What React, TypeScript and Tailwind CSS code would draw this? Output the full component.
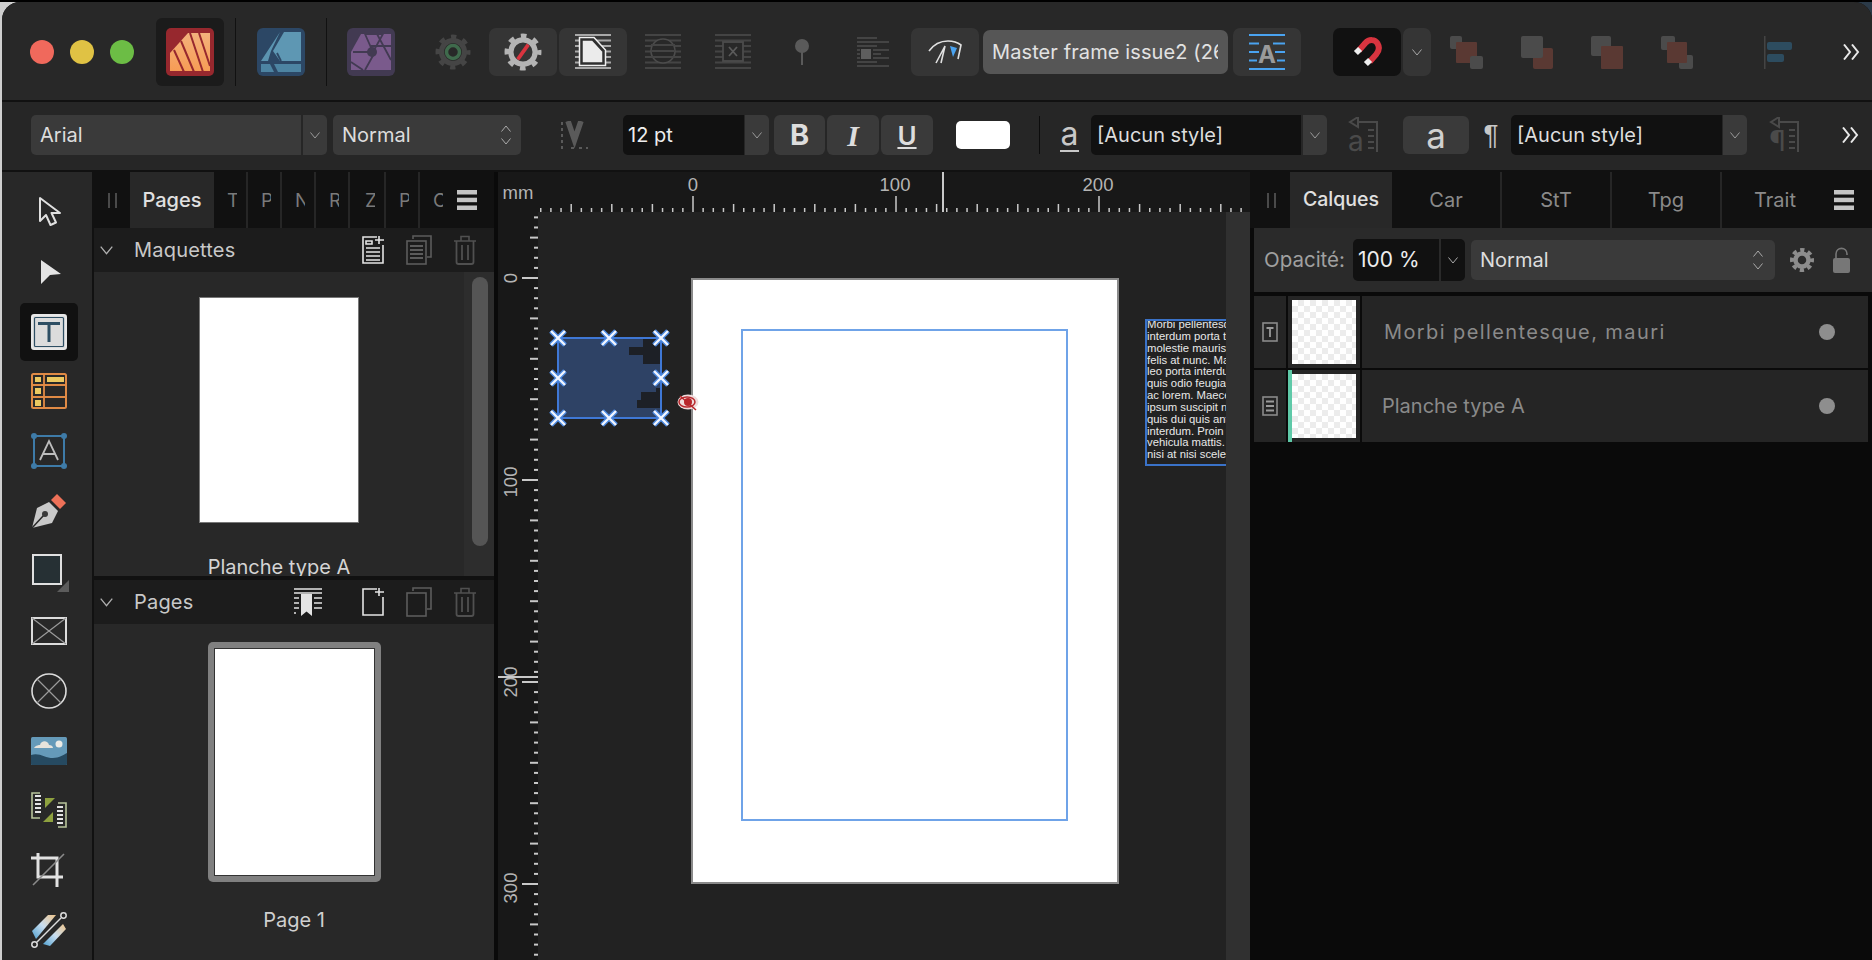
import React from "react";

const F = "font-['Inter','Liberation_Sans',sans-serif]";

const Chev = ({ c = "#aaa", w = 10, h = 7, up = false }: { c?: string; w?: number; h?: number; up?: boolean }) => (
  <svg width={w} height={h} viewBox="0 0 10 7" className="shrink-0">
    <path d={up ? "M0.5 6.5 L5 1 L9.5 6.5" : "M0.5 0.5 L5 6 L9.5 0.5"} fill="none" stroke={c} strokeWidth="1" />
  </svg>
);

const UpDown = ({ c = "#aaa" }: { c?: string }) => (
  <div className="flex flex-col gap-[6px]">
    <Chev c={c} up />
    <Chev c={c} />
  </div>
);

const More = () => (
  <svg width="17" height="16" viewBox="0 0 17 16" className="shrink-0">
    <path d="M1 0.5 L7 8 L1 15.5 M9 0.5 L15 8 L9 15.5" fill="none" stroke="#e8e8e8" strokeWidth="2" />
  </svg>
);

const Burger = ({ w = 20 }: { w?: number }) => (
  <svg width={w} height="20" viewBox={`0 0 ${w} 20`} className="shrink-0">
    <rect width={w} height="4.5" fill="#c4c4c4" />
    <rect y="7.7" width={w} height="4.5" fill="#c4c4c4" />
    <rect y="15.5" width={w} height="4.5" fill="#c4c4c4" />
  </svg>
);

const Grip = () => (
  <svg width="9" height="15" viewBox="0 0 9 15" className="shrink-0">
    <path d="M1 0V15M8 0V15" stroke="#4a4a4a" strokeWidth="2" />
  </svg>
);

const Gear = ({ size, c, children }: { size: number; c: string; children?: React.ReactNode }) => (
  <svg width={size} height={size} viewBox="0 0 36 36" className="shrink-0">
    <circle cx="18" cy="18" r="11.5" fill="none" stroke={c} strokeWidth="5" />
    <circle cx="18" cy="18" r="15" fill="none" stroke={c} strokeWidth="5" strokeDasharray="5.3 6.5" strokeDashoffset="2.6" />
    {children}
  </svg>
);

const Publisher = () => (
  <svg width="48" height="48" viewBox="0 0 48 48">
    <rect width="48" height="48" rx="5" fill="#97282e" />
    <defs>
      <linearGradient id="pub" x1="0" y1="0" x2="0" y2="1">
        <stop offset="0" stopColor="#f3b27c" />
        <stop offset="1" stopColor="#f79c55" />
      </linearGradient>
    </defs>
    <path d="M22 5H44V43H4V25Z" fill="url(#pub)" />
    <path d="M24 5L37 44M33 5L44 38M15 13L28 44M8 22L18 44" stroke="#97282e" strokeWidth="2" fill="none" />
  </svg>
);

const Designer = () => (
  <svg width="48" height="48" viewBox="0 0 48 48">
    <rect width="48" height="48" rx="6" fill="#2c4765" />
    <path d="M27 4H44V33H23L16 23Z" fill="#5e97b3" />
    <path d="M4 33L23 4L14 23L11 33Z" fill="#5b94b0" />
    <path d="M4 36H44V44H21L17 36M13 36L17 44H4V36Z" fill="#4d84a2" />
    <path d="M20 25L24 33" stroke="#2c4765" strokeWidth="1.8" />
  </svg>
);

const PhotoApp = () => (
  <svg width="48" height="48" viewBox="0 0 48 48">
    <rect width="48" height="48" rx="6" fill="#423a52" />
    <path d="M14 6H44V42H4V24Z" fill="#7a5a8c" />
    <path d="M18 6L36 6L26 24ZM6 24H24M30 6L44 32M44 18H24M28 24L18 42M4 34L16 42" stroke="#423a52" strokeWidth="1.8" fill="none" />
    <circle cx="25" cy="24" r="5" fill="#423a52" />
  </svg>
);

const Stripes = ({ c, n = 7 }: { c: string; n?: number }) => (
  <>
    {Array.from({ length: n }).map((_, i) => (
      <rect key={i} y={i * (33 / (n - 1))} width="36" height="2" fill={c} />
    ))}
  </>
);

const WrapPage = () => (
  <svg width="36" height="36" viewBox="0 0 36 36" className="shrink-0">
    <Stripes c="#a8a8a8" />
    <path d="M6 5H18L29 17V30H6Z" fill="#ebebeb" stroke="#2f2f2f" strokeWidth="3.5" />
    <path d="M4.5 3.5H19L30.5 16V31.5H4.5Z" fill="none" stroke="#f0f0f0" strokeWidth="1.5" />
  </svg>
);

const WrapCircle = () => (
  <svg width="36" height="36" viewBox="0 0 36 36" className="shrink-0">
    <Stripes c="#444" />
    <circle cx="18" cy="17" r="12" fill="#282828" stroke="#4c4c4c" strokeWidth="1.6" />
    <path d="M6 11H30M6 17H30M6 23H30" stroke="#444" strokeWidth="2" />
  </svg>
);

const WrapBox = () => (
  <svg width="36" height="36" viewBox="0 0 36 36" className="shrink-0">
    <Stripes c="#444" />
    <rect x="8" y="8" width="20" height="19" fill="#282828" stroke="#4c4c4c" strokeWidth="1.8" />
    <path d="M14 13L22 22M22 13L14 22" stroke="#5a5a5a" strokeWidth="1.8" />
  </svg>
);

const Pin = () => (
  <svg width="16" height="26" viewBox="0 0 16 26" className="shrink-0">
    <circle cx="8" cy="7" r="7" fill="#5a5a5a" />
    <rect x="7" y="12" width="2" height="14" fill="#5a5a5a" />
  </svg>
);

const ParaImage = () => (
  <svg width="32" height="30" viewBox="0 0 32 30" className="shrink-0">
    <g fill="#444">
      <rect width="20" height="2" />
      <rect y="4" width="32" height="2" />
      <rect y="8" width="20" height="2" />
      <rect y="12" width="3" height="2" />
      <rect x="16" y="12" width="16" height="2" />
      <rect y="16" width="3" height="2" />
      <rect x="16" y="16" width="8" height="2" />
      <rect y="20" width="3" height="2" />
      <rect x="16" y="20" width="16" height="2" />
      <rect y="24" width="20" height="2" />
      <rect y="28" width="32" height="2" />
    </g>
    <rect x="4" y="12" width="10" height="10" fill="#5e5e5e" />
  </svg>
);

const Gauge = () => (
  <svg width="34" height="26" viewBox="0 0 34 26" className="shrink-0">
    <path d="M1 12C6 5 13 2 20 2C25 2 29 3 33 6L30 20" fill="none" stroke="#e0e0e0" strokeWidth="1.6" />
    <path d="M8 24L17 7L13 24" fill="none" stroke="#e0e0e0" strokeWidth="1.6" />
    <path d="M22 7L29 9L25 18Z" fill="#4aa3f0" />
  </svg>
);

const FrameA = () => (
  <svg width="36" height="36" viewBox="0 0 36 36" className="shrink-0">
    <path d="M0 1H36M0 35H36" stroke="#4aa3f0" strokeWidth="2" />
    <path d="M0 9.5H10M24 9.5H36M0 18H10M26 18H36M0 26.5H8M28 26.5H36" stroke="#4aa3f0" strokeWidth="2" />
    <text x="18" y="29" textAnchor="middle" fontSize="24" fontWeight="700" fill="#9a9a9a" fontFamily="Inter, sans-serif">A</text>
  </svg>
);

const Magnet = () => (
  <svg width="30" height="30" viewBox="0 0 30 30" className="shrink-0">
    <path d="M7 13L14 6C18 2 24 3 26 7C28 11 27 15 24 18L17 25" fill="none" stroke="#d8343f" strokeWidth="6" transform="rotate(-4 15 15)" />
    <path d="M4 12L8 16" stroke="#eee" strokeWidth="6" />
    <path d="M14 23L18 27" stroke="#eee" strokeWidth="6" />
  </svg>
);

const Bool = ({ k }: { k: number }) => {
  const g = "#4b4b4b";
  const b = "#5a3933";
  return (
    <svg width="33" height="33" viewBox="0 0 33 33" className="shrink-0">
      {k === 1 && (
        <>
          <rect width="12" height="13" rx="2" fill={g} />
          <rect x="6" y="6" width="21" height="21" rx="1" fill={b} />
          <rect x="20" y="20" width="13" height="13" rx="2" fill={g} />
        </>
      )}
      {k === 2 && (
        <>
          <rect x="12" y="12" width="20" height="21" rx="2" fill={b} />
          <rect width="22" height="22" rx="2" fill={g} />
        </>
      )}
      {k === 3 && (
        <>
          <rect width="20" height="20" rx="2" fill={g} />
          <rect x="10" y="10" width="22" height="23" rx="1" fill={b} />
        </>
      )}
      {k === 4 && (
        <>
          <rect width="14" height="14" rx="2" fill={g} />
          <rect x="18" y="19" width="14" height="14" rx="2" fill={g} />
          <rect x="6" y="6" width="20" height="21" rx="1" fill={b} />
        </>
      )}
    </svg>
  );
};

const Align = () => (
  <svg width="28" height="33" viewBox="0 0 28 33" className="shrink-0">
    <rect width="1.5" height="33" fill="#444" />
    <rect x="3" y="6" width="25" height="8" rx="2" fill="#2d4c5f" />
    <rect x="3" y="18" width="17" height="8" rx="2" fill="#2d4c5f" />
  </svg>
);

const Kern = () => (
  <svg width="27" height="28" viewBox="0 0 27 28" className="shrink-0">
    <path d="M7 0L13.5 19L20 0" fill="none" stroke="#5a5a5a" strokeWidth="5.5" />
    <path d="M1 1V22M1 25V27H5M10 27H13M18 27H21M25 27H27" stroke="#5a5a5a" strokeWidth="2" strokeDasharray="3 3" fill="none" />
  </svg>
);

const StyleArrow = ({ glyph }: { glyph: string }) => (
  <svg width="30" height="36" viewBox="0 0 30 36" className="shrink-0">
    <path d="M10 5H29V35M2 5L10 0V10Z" fill="none" stroke="#4a4a4a" strokeWidth="2" />
    <path d="M20 13H26M20 19H26M20 25H26M20 31H26" stroke="#4a4a4a" strokeWidth="2" />
    <text x="0" y="34" fontSize="28" fill="#4a4a4a" fontFamily="Inter, sans-serif">{glyph}</text>
  </svg>
);

const Cursor = () => (
  <svg width="36" height="36" viewBox="0 0 36 36">
    <path d="M9 4V27L15 21L19.5 31L25 28.5L20.5 19H29Z" fill="#282828" stroke="#e0e0e0" strokeWidth="2" strokeLinejoin="round" />
  </svg>
);
const NodeTool = () => (
  <svg width="36" height="36" viewBox="0 0 36 36">
    <path d="M10 6L30 20L19 21L10 30Z" fill="#e4e4e4" />
  </svg>
);
const TextTool = () => (
  <svg width="36" height="36" viewBox="0 0 36 36">
    <rect x="1" y="1" width="34" height="34" rx="2" fill="#dcdcdc" stroke="#e8e8e8" strokeWidth="2" />
    <rect x="3.5" y="3.5" width="29" height="29" rx="1" fill="none" stroke="#2d4e63" strokeWidth="1.2" />
    <path d="M7 9.5H29M18 9.5V28" stroke="#2d4e63" strokeWidth="3" fill="none" />
  </svg>
);
const TableTool = () => (
  <svg width="36" height="36" viewBox="0 0 36 36">
    <rect x="1" y="1" width="34" height="34" rx="1.5" fill="none" stroke="#e08a45" strokeWidth="2" />
    <path d="M1 12H35M1 24H35M13 1V35" stroke="#e08a45" strokeWidth="1.8" />
    <g fill="#ecc860">
      <rect x="4" y="4" width="6" height="5" />
      <rect x="16" y="4" width="17" height="5" />
      <rect x="4" y="15" width="6" height="6" />
      <rect x="4" y="27" width="6" height="6" />
    </g>
  </svg>
);
const FrameText = () => (
  <svg width="36" height="36" viewBox="0 0 36 36">
    <rect x="3" y="3" width="30" height="30" fill="none" stroke="#3e7ba8" strokeWidth="2" />
    <g fill="#3e7ba8">
      <circle cx="3" cy="3" r="3" />
      <circle cx="33" cy="3" r="3" />
      <circle cx="3" cy="33" r="3" />
      <circle cx="33" cy="33" r="3" />
    </g>
    <path d="M9 27L18 8L27 27M12 21H24" fill="none" stroke="#bdbdbd" strokeWidth="1.8" />
  </svg>
);
const Pen = () => (
  <svg width="36" height="36" viewBox="0 0 36 36">
    <path d="M1 35L6 15L18 9L27 18L21 30Z" fill="#c9c9c9" />
    <path d="M1 35L13 22" stroke="#282828" strokeWidth="1.5" />
    <circle cx="14" cy="21" r="3" fill="#3a3a3a" />
    <path d="M20 7L26 1L35 10L29 16Z" fill="#ee7158" />
  </svg>
);
const RectTool = () => (
  <svg width="42" height="40" viewBox="0 0 42 40">
    <rect x="4" y="1" width="28" height="29" fill="#263034" stroke="#e0e0e0" strokeWidth="2" />
    <path d="M40 26V38H28Z" fill="#5c5c5c" />
  </svg>
);
const PicFrame = () => (
  <svg width="36" height="28" viewBox="0 0 36 28">
    <rect x="1" y="1" width="34" height="26" fill="none" stroke="#dcdcdc" strokeWidth="2" />
    <path d="M1 1L35 27M35 1L1 27" stroke="#9a9a9a" strokeWidth="1.2" />
  </svg>
);
const EllFrame = () => (
  <svg width="36" height="36" viewBox="0 0 36 36">
    <circle cx="18" cy="18" r="17" fill="none" stroke="#dcdcdc" strokeWidth="1.6" />
    <path d="M6 6L30 30M30 6L6 30" stroke="#9a9a9a" strokeWidth="1.2" />
  </svg>
);
const ImageTool = () => (
  <svg width="36" height="28" viewBox="0 0 36 28">
    <rect width="36" height="28" rx="1.5" fill="#659ab9" />
    <path d="M0 18C8 15 14 21 22 21C28 21 32 18 36 16V27A1 1 0 0 1 35 28H1A1 1 0 0 1 0 27Z" fill="#264a61" />
    <circle cx="28" cy="7" r="3.5" fill="#ecebe6" />
    <path d="M3 11C5 8 8 8 9 8C10 3 17 3 18 8C20 8 22 9 22 11Z" fill="#e6e3dc" />
  </svg>
);
const LinkTool = () => (
  <svg width="36" height="36" viewBox="0 0 36 36">
    <path d="M9 1H1V26H9" fill="none" stroke="#b7c49a" strokeWidth="1.6" />
    <path d="M27 35H35V11H27" fill="none" stroke="#b7c49a" strokeWidth="1.6" />
    <path d="M4 4H10M4 8H10M4 12H10M4 16H10M4 20H10M26 15H32M26 19H32M26 23H32M26 27H32M26 31H32" stroke="#e4e4e4" strokeWidth="2" />
    <path d="M14 6H24L14 16Z" fill="#8ea13f" />
    <path d="M22 20V30H12Z" fill="#8ea13f" />
  </svg>
);
const CropTool = () => (
  <svg width="36" height="34" viewBox="0 0 36 34">
    <path d="M7 0V24H32M0 5H26V34" fill="none" stroke="#e2e2e2" strokeWidth="3" />
    <path d="M2 32L33 1" stroke="#8a8a8a" strokeWidth="1.6" />
  </svg>
);
const EraserTool = () => (
  <svg width="36" height="36" viewBox="0 0 36 36">
    <defs>
      <linearGradient id="er" x1="0" y1="1" x2="1" y2="0">
        <stop offset="0" stopColor="#4d9fcf" />
        <stop offset="0.5" stopColor="#c9def0" />
        <stop offset="1" stopColor="#eec48a" />
      </linearGradient>
    </defs>
    <path d="M1 19L17 3L25 3L5 27Z" fill="url(#er)" />
    <path d="M12 32L32 12L35 17L19 34Z" fill="url(#er)" />
    <path d="M6 30L30 6" stroke="#ddd" strokeWidth="1.5" />
    <circle cx="32.5" cy="3.5" r="2.7" fill="#282828" stroke="#ddd" strokeWidth="1.5" />
    <circle cx="3.5" cy="32.5" r="2.7" fill="#282828" stroke="#ddd" strokeWidth="1.5" />
  </svg>
);

const NewDoc = ({ lines, c = "#e4e4e4" }: { lines?: boolean; c?: string }) => (
  <svg width="22" height="28" viewBox="0 0 22 28" className="shrink-0">
    <path d="M15 1H1V27H21V9" fill="none" stroke={c} strokeWidth="1.6" />
    <path d="M17 0V8M13 4H22" stroke={c} strokeWidth="1.6" />
    {lines && <path d="M4 5H10V8H4ZM4 12H18M4 16H18M4 20H18M4 24H18" stroke={c} strokeWidth="1.6" fill="none" />}
  </svg>
);
const DupDoc = ({ lines }: { lines?: boolean }) => (
  <svg width="26" height="30" viewBox="0 0 26 30" className="shrink-0">
    <path d="M7 4V1H25V22H21" fill="none" stroke="#5c5c5c" strokeWidth="1.6" />
    <rect x="1" y="6" width="19" height="23" fill="none" stroke="#5c5c5c" strokeWidth="1.6" />
    {lines && <path d="M4 11H17M4 15H17M4 19H17M4 23H17" stroke="#5c5c5c" strokeWidth="2" />}
  </svg>
);
const Trash = () => (
  <svg width="22" height="30" viewBox="0 0 22 30" className="shrink-0">
    <path d="M0 6H22M7 6V1.5H15V6" fill="none" stroke="#505050" strokeWidth="1.6" />
    <path d="M2.5 6V27C2.5 28.5 3 29 4.5 29H17.5C19 29 19.5 28.5 19.5 27V6M8 10V25M14 10V25" fill="none" stroke="#505050" strokeWidth="1.8" />
  </svg>
);
const Bookmark = () => (
  <svg width="28" height="28" viewBox="0 0 28 28" className="shrink-0">
    <path d="M0 1H28M0 5H28" stroke="#e4e4e4" strokeWidth="1.6" />
    <path d="M7 6H18V28L12.5 23.5L7 28Z" fill="#e4e4e4" />
    <path d="M0 10H5M0 15H5M0 20H5M0 25H2M20 10H28M20 15H28M20 20H28" stroke="#e4e4e4" strokeWidth="1.6" />
  </svg>
);

const Field = ({ t, w, bg, className = "", tc = "text-[#ddd]", px = "pl-[9px]" }: { t: string; w: string; bg: string; className?: string; tc?: string; px?: string }) => (
  <div className={`${w} ${bg} ${px} ${tc} ${className} h-[40px] flex items-center text-[20px] whitespace-nowrap overflow-hidden shrink-0`}>{t}</div>
);

const Drop = ({ className = "", bg = "bg-[#3a3a3a]" }: { className?: string; bg?: string }) => (
  <div className={`${className} ${bg} w-[24px] h-[40px] rounded-r-[5px] flex items-center justify-center shrink-0`}>
    <Chev c="#9a9a9a" />
  </div>
);

const Btn = ({ className = "", children }: { className?: string; children: React.ReactNode }) => (
  <div className={`${className} w-[68px] h-[48px] rounded-[7px] bg-[#353535] flex items-center justify-center shrink-0`}>{children}</div>
);

const RulerH = () => {
  const ticks = [];
  for (let i = -15; i <= 54; i++) {
    const x = 195 + i * 10.15;
    const h = i % 20 === 0 ? 16 : i % 4 === 0 ? 8 : 4;
    ticks.push(<rect key={i} x={x - 0.75} y={40 - h} width="1.5" height={h} fill="#c8c8c8" />);
  }
  return (
    <svg width="752" height="40" viewBox="0 0 752 40" className="block">
      <g fontFamily="Liberation Sans, Arial, sans-serif" fontSize="18.5" fill="#b4b4b4" textAnchor="middle">
        <text x="20" y="27">mm</text>
        <text x="195" y="19">0</text>
        <text x="397" y="19">100</text>
        <text x="600" y="19">200</text>
      </g>
      {ticks}
      <rect x="444" y="0" width="2" height="40" fill="#c8c8c8" />
    </svg>
  );
};

const RulerV = () => {
  const ticks = [];
  for (let i = -6; i <= 68; i++) {
    const y = 66 + i * 10.1;
    const w = i % 20 === 0 ? 16 : i % 4 === 0 ? 8 : 4;
    ticks.push(<rect key={i} x={40 - w} y={y - 1} width={w} height="2" fill="#c8c8c8" />);
  }
  const labels: [string, number][] = [["0", 66], ["100", 270], ["200", 470], ["300", 676]];
  return (
    <svg width="40" height="748" viewBox="0 0 40 748" className="block">
      <g fontFamily="Liberation Sans, Arial, sans-serif" fontSize="18.5" fill="#b4b4b4" textAnchor="middle">
        {labels.map(([t, y]) => (
          <text key={t} x="12" y={y} dy="7" transform={`rotate(-90 12 ${y})`}>{t}</text>
        ))}
      </g>
      {ticks}
      <rect x="0" y="464" width="40" height="2" fill="#c8c8c8" />
    </svg>
  );
};

const Selection = () => {
  const xs = [558, 609, 661];
  const ys = [338, 378, 418];
  const pts = xs.flatMap((x) => ys.map((y) => [x, y])).filter(([x, y]) => !(x === 609 && y === 378));
  return (
    <svg width="160" height="110" viewBox="543 322 160 110" className="absolute left-[5px] top-[110px]">
      <rect x="558" y="338" width="103" height="80" fill="#2e4265" />
      <path d="M643 339H660V364H643V355H629V347H643ZM656 388H660V408H637V400H641V392H656Z" fill="#1d2026" />
      <rect x="558" y="338" width="103" height="80" fill="none" stroke="#3f78d6" strokeWidth="2" />
      {pts.map(([x, y]) => (
        <g key={`${x}-${y}`}>
          <path d={`M${x - 7} ${y - 7}L${x + 7} ${y + 7}M${x + 7} ${y - 7}L${x - 7} ${y + 7}`} stroke="#4a86dc" strokeWidth="5.2" />
          <path d={`M${x - 7} ${y - 7}L${x + 7} ${y + 7}M${x + 7} ${y - 7}L${x - 7} ${y + 7}`} stroke="#f2f6ff" strokeWidth="2.4" />
        </g>
      ))}
      <ellipse cx="688" cy="402" rx="10.5" ry="7.5" fill="#efdcdc" />
      <ellipse cx="687" cy="402" rx="8" ry="5" fill="none" stroke="#b8272c" strokeWidth="1.5" />
      <circle cx="688" cy="402" r="4" fill="#b8272c" />
      <path d="M680 396L696 410" stroke="#b8272c" strokeWidth="1.6" />
    </svg>
  );
};

const LINES = [
  "Morbi pellentesque, mauris",
  "interdum porta tellus",
  "molestie mauris sit amet",
  "felis at nunc. Mauris",
  "leo porta interdum",
  "quis odio feugiat",
  "ac lorem. Maecenas",
  "ipsum suscipit nec",
  "quis dui quis ante",
  "interdum. Proin a",
  "vehicula mattis. Sed",
  "nisi at nisi scelerisque",
];

const Checker = ({ className = "" }: { className?: string }) => (
  <div className={`${className} w-[64px] h-[64px] bg-[repeating-conic-gradient(#ececec_0_25%,#ffffff_0_50%)] bg-[length:12px_12px]`} />
);

const SectionHeader = ({ title, children }: { title: string; children: React.ReactNode }) => (
  <div className="h-[44px] bg-[#1c1c1c] flex items-center shrink-0">
    <div className="ml-[6px]"><Chev c="#b0b0b0" w={13} h={9} /></div>
    <span className="ml-[21px] text-[20px] tracking-[0.2px] text-[#c8c8c8]">{title}</span>
    <div className="ml-auto flex items-center gap-[22px] pr-[18px]">{children}</div>
  </div>
);

const SmallTab = ({ t, last }: { t: string; last?: boolean }) => (
  <div className={`w-[34px] h-full pl-[13px] flex items-center shrink-0 ${last ? "" : "border-r-2 border-[#262626]"}`}>
    <span className="w-[10px] overflow-hidden block text-[19px] text-[#7a7a7a] leading-none">{t}</span>
  </div>
);

const BigTab = ({ t, w, last }: { t: string; w: string; last?: boolean }) => (
  <div className={`${w} h-full flex items-center justify-center shrink-0 text-[20px] text-[#8a8a8a] ${last ? "" : "border-r-2 border-[#262626]"}`}>{t}</div>
);

const Tool = ({ children, sel }: { children: React.ReactNode; sel?: boolean }) => (
  <div className={`w-[58px] h-[58px] my-[1px] flex items-center justify-center rounded-[5px] ${sel ? "bg-[#111]" : ""}`}>{children}</div>
);

const LayerRow = ({ name, icon, green, tx, mt }: { name: string; icon: React.ReactNode; green?: boolean; tx: string; mt?: string }) => (
  <div className={`${mt ?? ""} h-[72px] flex gap-[2px] pr-[4px] shrink-0`}>
    <div className="w-[32px] bg-[#252525] flex items-center justify-center">{icon}</div>
    <div className={`w-[72px] bg-[#252525] flex items-center ${green ? "border-l-4 border-[#5fc9a8]" : "pl-[4px]"}`}>
      <Checker />
    </div>
    <div className="flex-1 bg-[#252525] flex items-center">
      <span className={`${tx} text-[20px] text-[#8a8a8a]`}>{name}</span>
      <span className="ml-auto mr-[33px] w-[16px] h-[16px] rounded-full bg-[#8e8e8e]" />
    </div>
  </div>
);

export default function App() {
  return (
    <div className={`${F} w-[1872px] h-[960px] overflow-hidden border-t-2 border-black pl-[2px] bg-[linear-gradient(to_right,#cfcfcf_50%,#2b3a48_50%)]`}>
      <div className="w-[1870px] h-[958px] rounded-t-[18px] overflow-hidden bg-[#111] flex flex-col">
        {/* Row 1 */}
        <div className="h-[98px] pt-[2px] bg-[#282828] flex items-center shrink-0">
          <span className="ml-[28px] w-[24px] h-[24px] rounded-full bg-[#f0695c] shrink-0" />
          <span className="ml-[16px] w-[24px] h-[24px] rounded-full bg-[#e0c244] shrink-0" />
          <span className="ml-[16px] w-[24px] h-[24px] rounded-full bg-[#6cbd45] shrink-0" />
          <div className="ml-[22px] w-[68px] h-[68px] rounded-[6px] bg-[#1b1b1b] flex items-center justify-center shrink-0"><Publisher /></div>
          <div className="ml-[11px] w-[1px] h-[68px] bg-[#111] shrink-0" />
          <div className="ml-[21px] shrink-0"><Designer /></div>
          <div className="ml-[21px] w-[1px] h-[68px] bg-[#111] shrink-0" />
          <div className="ml-[20px] shrink-0"><PhotoApp /></div>
          <div className="ml-[40px] shrink-0">
            <Gear size={36} c="#454545"><circle cx="18" cy="18" r="6.5" fill="none" stroke="#3f6a4c" strokeWidth="3.5" /></Gear>
          </div>
          <Btn className="ml-[18px]">
            <Gear size={38} c="#b4b4b4"><path d="M13 25L23 11" stroke="#d9343f" strokeWidth="3.5" /></Gear>
          </Btn>
          <Btn className="ml-[2px]"><WrapPage /></Btn>
          <div className="ml-[18px] shrink-0"><WrapCircle /></div>
          <div className="ml-[34px] shrink-0"><WrapBox /></div>
          <div className="ml-[43px] shrink-0"><Pin /></div>
          <div className="ml-[47px] shrink-0"><ParaImage /></div>
          <Btn className="ml-[22px]"><Gauge /></Btn>
          <div className="ml-[4px] w-[245px] h-[44px] rounded-[7px] bg-[#565656] pl-[9px] flex items-center shrink-0">
            <div className="w-[226px] shrink-0 overflow-hidden whitespace-nowrap text-[20px] tracking-[0.1px] text-[#e2e2e2]">Master frame issue2 (26 pages).afpub</div>
          </div>
          <Btn className="ml-[5px]"><FrameA /></Btn>
          <div className="ml-[32px] w-[68px] h-[48px] rounded-[7px] bg-[#111] flex items-center justify-center shrink-0"><Magnet /></div>
          <div className="ml-[2px] w-[28px] h-[48px] rounded-[7px] bg-[#353535] flex items-center justify-center shrink-0"><Chev c="#a8a8a8" /></div>
          <div className="ml-[19px] shrink-0"><Bool k={1} /></div>
          <div className="ml-[38px] shrink-0"><Bool k={2} /></div>
          <div className="ml-[37px] shrink-0"><Bool k={3} /></div>
          <div className="ml-[37px] shrink-0"><Bool k={4} /></div>
          <div className="ml-[70px] shrink-0"><Align /></div>
          <div className="ml-[51px] shrink-0"><More /></div>
        </div>
        <div className="h-[2px] shrink-0 bg-[#111]" />
        {/* Row 2 */}
        <div className="h-[68px] pb-[2px] bg-[#262626] flex items-center shrink-0">
          <Field t="Arial" w="w-[270px]" bg="bg-[#3a3a3a]" className="ml-[29px] rounded-l-[5px]" />
          <Drop className="ml-[2px]" />
          <div className="ml-[6px] w-[188px] h-[40px] rounded-[5px] bg-[#3a3a3a] pl-[9px] pr-[10px] flex items-center justify-between text-[20px] text-[#ddd] shrink-0">
            <span>Normal</span>
            <UpDown />
          </div>
          <div className="ml-[40px] shrink-0"><Kern /></div>
          <Field t="12 pt" w="w-[121px]" bg="bg-[#111]" px="pl-[5px]" className="ml-[35px] rounded-l-[5px] text-[#eee]" />
          <Drop className="ml-[1px]" />
          <div className="ml-[5px] w-[51px] h-[40px] rounded-[6px] bg-[#3a3a3a] flex items-center justify-center text-[29px] font-bold text-[#ddd] shrink-0">B</div>
          <div className="ml-[2px] w-[52px] h-[40px] rounded-[6px] bg-[#3a3a3a] flex items-center justify-center font-['Liberation_Serif',serif] text-[30px] font-bold italic text-[#ddd] shrink-0">I</div>
          <div className="ml-[2px] w-[52px] h-[40px] rounded-[6px] bg-[#3a3a3a] flex items-center justify-center text-[26px] font-semibold underline text-[#ddd] shrink-0">U</div>
          <div className="ml-[23px] w-[54px] h-[28px] rounded-[5px] bg-white shrink-0" />
          <div className="ml-[29px] w-[1px] h-[38px] bg-[#0c0c0c] shrink-0" />
          <div className="ml-[20px] w-[19px] text-[32px] leading-[32px] text-[#c8c8c8] border-b-2 border-[#c8c8c8] flex justify-center shrink-0">a</div>
          <Field t="[Aucun style]" w="w-[210px]" bg="bg-[#111]" px="pl-[6px]" className="ml-[12px] rounded-l-[5px] text-[#ddd]" />
          <Drop className="ml-[2px]" />
          <div className="ml-[21px] shrink-0"><StyleArrow glyph="a" /></div>
          <div className="ml-[25px] w-[66px] h-[38px] rounded-[6px] bg-[#3a3a3a] flex items-center justify-center text-[35px] leading-none text-[#d0d0d0] shrink-0">a</div>
          <div className="ml-[16px] w-[12px] font-['Liberation_Sans',sans-serif] text-[28px] text-[#c8c8c8] flex justify-center shrink-0">¶</div>
          <Field t="[Aucun style]" w="w-[211px]" bg="bg-[#111]" px="pl-[6px]" className="ml-[14px] rounded-l-[5px] text-[#ddd]" />
          <Drop className="ml-[1px]" />
          <div className="ml-[22px] shrink-0"><StyleArrow glyph="¶" /></div>
          <div className="ml-[43px] shrink-0"><More /></div>
        </div>
        <div className="h-[2px] shrink-0 bg-[#111]" />
        {/* Main */}
        <div className="flex-1 flex min-h-0">
          {/* Tools */}
          <div className="w-[92px] bg-[#282828] border-r-2 border-[#111] pl-[18px] pt-[10px] flex flex-col shrink-0">
            <Tool><Cursor /></Tool>
            <Tool><NodeTool /></Tool>
            <Tool sel><TextTool /></Tool>
            <Tool><TableTool /></Tool>
            <Tool><FrameText /></Tool>
            <Tool><Pen /></Tool>
            <Tool><div className="pl-[2px] pt-[6px]"><RectTool /></div></Tool>
            <Tool><PicFrame /></Tool>
            <Tool><EllFrame /></Tool>
            <Tool><ImageTool /></Tool>
            <Tool><LinkTool /></Tool>
            <Tool><CropTool /></Tool>
            <Tool><EraserTool /></Tool>
          </div>
          {/* Left panel */}
          <div className="w-[400px] flex flex-col shrink-0 bg-[#111]">
            <div className="h-[56px] flex items-center shrink-0">
              <div className="ml-[14px] w-[22px] shrink-0"><Grip /></div>
              <div className="w-[84px] h-full bg-[#282828] flex items-center justify-center text-[20px] font-medium text-[#e0e0e0] shrink-0">Pages</div>
              <SmallTab t="T" />
              <SmallTab t="P" />
              <SmallTab t="N" />
              <SmallTab t="R" />
              <div className="w-[36px] h-full pl-[15px] flex items-center border-r-2 border-[#262626] shrink-0">
                <span className="w-[10px] overflow-hidden block text-[19px] text-[#7a7a7a] leading-none">Z</span>
              </div>
              <SmallTab t="P" />
              <SmallTab t="C" last />
              <div className="ml-[3px]"><Burger /></div>
            </div>
            <SectionHeader title="Maquettes">
              <NewDoc lines />
              <DupDoc lines />
              <Trash />
            </SectionHeader>
            <div className="h-[304px] bg-[#282828] flex overflow-hidden shrink-0">
              <div className="w-[370px] flex flex-col items-center pt-[25px]">
                <div className="w-[160px] h-[226px] bg-white border border-[#777] shrink-0" />
                <div className="mt-[33px] text-[20px] leading-[22px] text-[#d4d4d4] whitespace-nowrap">Planche type A</div>
              </div>
              <div className="w-[30px] bg-[#2d2d2d] pl-[8px] pt-[5px]">
                <div className="w-[16px] h-[269px] rounded-full bg-[#555]" />
              </div>
            </div>
            <div className="h-[4px] shrink-0" />
            <SectionHeader title="Pages">
              <div className="mr-[18px]"><Bookmark /></div>
              <NewDoc />
              <DupDoc />
              <Trash />
            </SectionHeader>
            <div className="flex-1 bg-[#282828] flex flex-col items-center pt-[18px]">
              <div className="w-[173px] h-[240px] rounded-[5px] bg-[#808080] p-[6px] shrink-0">
                <div className="w-full h-full bg-white border border-[#333]" />
              </div>
              <div className="mt-[27px] text-[20px] leading-[22px] text-[#cfcfcf]">Page 1</div>
            </div>
          </div>
          <div className="w-[4px] bg-[#0a0a0a] shrink-0" />
          {/* Centre */}
          <div className="w-[752px] flex flex-col shrink-0">
            <div className="h-[40px] bg-[#181818] shrink-0"><RulerH /></div>
            <div className="flex-1 flex min-h-0">
              <div className="w-[40px] bg-[#181818] shrink-0"><RulerV /></div>
              <div className="relative w-[688px] bg-[#222] overflow-hidden shrink-0">
                <div className="absolute left-[153px] top-[66px] w-[428px] h-[606px] bg-white border-2 border-[#8a8a8a]">
                  <div className="absolute left-[48px] top-[49px] w-[327px] h-[492px] border-2 border-[#6fa3e8]" />
                </div>
                <Selection />
                <div className="absolute left-[607px] top-[107px] w-[200px] h-[147px] border-2 border-[#3a72c8] overflow-hidden font-['Liberation_Sans',Arial,sans-serif] text-[11.3px] leading-[11.85px] text-[#e8e8e8] whitespace-nowrap">
                  <div className="-mt-[2px]">
                    {LINES.map((l) => <div key={l}>{l}</div>)}
                  </div>
                </div>
              </div>
              <div className="w-[24px] bg-[#303030] shrink-0" />
            </div>
          </div>
          {/* Right panel */}
          <div className="w-[622px] flex flex-col shrink-0 bg-[#0a0a0a]">
            <div className="h-[56px] bg-[#111] flex items-center shrink-0">
              <div className="ml-[17px] w-[23px] shrink-0"><Grip /></div>
              <div className="w-[102px] h-full bg-[#282828] flex items-center justify-center text-[19.5px] font-medium text-[#e0e0e0] shrink-0">Calques</div>
              <BigTab t="Car" w="w-[110px]" />
              <BigTab t="StT" w="w-[110px]" />
              <BigTab t="Tpg" w="w-[110px]" />
              <BigTab t="Trait" w="w-[106px]" last />
              <div className="ml-[6px]"><Burger /></div>
            </div>
            <div className="ml-[4px] h-[64px] bg-[#2a2a2a] flex items-center shrink-0">
              <span className="ml-[10px] w-[89px] text-[20.5px] text-[#a0a0a0] whitespace-nowrap shrink-0">Opacité:</span>
              <div className="w-[86px] h-[42px] rounded-l-[5px] bg-[#111] pl-[5px] flex items-center text-[21px] text-[#eee] shrink-0">100 %</div>
              <div className="ml-[2px] w-[24px] h-[42px] rounded-r-[5px] bg-[#111] flex items-center justify-center shrink-0"><Chev c="#aaa" /></div>
              <div className="ml-[6px] w-[304px] h-[40px] rounded-[5px] bg-[#3a3a3a] pl-[9px] pr-[12px] flex items-center justify-between text-[20px] text-[#ddd] shrink-0">
                <span>Normal</span>
                <UpDown />
              </div>
              <div className="ml-[15px] shrink-0">
                <svg width="24" height="24" viewBox="0 0 24 24"><circle cx="12" cy="12" r="6.5" fill="none" stroke="#8c8c8c" strokeWidth="4.5" /><circle cx="12" cy="12" r="10" fill="none" stroke="#8c8c8c" strokeWidth="4" strokeDasharray="4.2 3.65" strokeDashoffset="2.1" /></svg>
              </div>
              <div className="ml-[19px] shrink-0">
                <svg width="17" height="26" viewBox="0 0 17 26"><path d="M3 12V7C3 -0.5 14 -0.5 14 7V8" fill="none" stroke="#777" strokeWidth="1.6" /><rect y="11" width="17" height="15" rx="2" fill="#777" /></svg>
              </div>
            </div>
            <div className="ml-[4px] mt-[4px] flex flex-col">
              <LayerRow
                name="Morbi pellentesque, mauri"
                tx="ml-[22px] tracking-[1.4px]"
                icon={<svg width="16" height="20" viewBox="0 0 16 20"><rect x="1" y="1" width="14" height="18" fill="none" stroke="#8a8a8a" strokeWidth="1.6" /><path d="M4.5 6H11.5M8 6V15" stroke="#9a9a9a" strokeWidth="1.8" /></svg>}
              />
              <LayerRow
                name="Planche type A"
                tx="ml-[20px]"
                mt="mt-[2px]"
                green
                icon={<svg width="16" height="20" viewBox="0 0 16 20"><rect x="1" y="1" width="14" height="18" fill="none" stroke="#8a8a8a" strokeWidth="1.6" /><path d="M4 5.5H12M4 10H12M4 14.5H12" stroke="#9a9a9a" strokeWidth="2" /></svg>}
              />
            </div>
          </div>
        </div>
      </div>
    </div>
  );
}
